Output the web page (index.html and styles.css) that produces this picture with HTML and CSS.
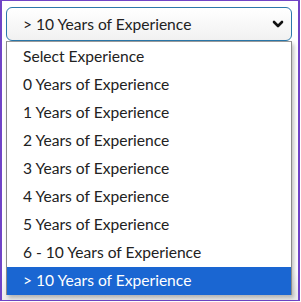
FILE: index.html
```html
<html>
<head>
<title>Experience</title>
<link rel="stylesheet" href="styles.css">
</head>
<body>
<div class="frame">
  <div class="field">
    <div class="selectBox">
      <span class="current">&gt; 10 Years of Experience</span>
      <svg class="chevron" width="12" height="8" viewBox="0 0 12 8"><polyline points="2,2 6,6 10,2" fill="none" stroke="#111" stroke-width="2.6" stroke-linecap="round" stroke-linejoin="round"/></svg>
    </div>
    <ul class="options">
      <li>Select Experience</li>
      <li>0 Years of Experience</li>
      <li>1 Years of Experience</li>
      <li>2 Years of Experience</li>
      <li>3 Years of Experience</li>
      <li>4 Years of Experience</li>
      <li>5 Years of Experience</li>
      <li>6 - 10 Years of Experience</li>
      <li class="selected">&gt; 10 Years of Experience</li>
    </ul>
  </div>
</div>
</body>
</html>
```
FILE: styles.css
```css
body{
    margin: 0;
    font-family: Lato, "Open Sans", sans-serif;
    font-size: 15.6px;
    color: #222;
}
.frame{
    width: 300px;
    height: 301px;
    border: 1px solid #7044c6;
    border-left-width: 2px;
    border-right-width: 2px;
    padding: 6px 0 0 4px;
    box-sizing: border-box;
    background: linear-gradient(#fff 90%, #ececec);
}
.field{
    position: relative;
    width: 286px;
}
.selectBox{
    height: 34px;
    box-sizing: border-box;
    border: 1px solid #2a78ab;
    border-radius: 6px;
    background: linear-gradient(#fff, #f1f1f1);
    display: flex;
    align-items: center;
    justify-content: space-between;
    padding: 0 7px 0 16px;
}
.current{
    padding-bottom: 1px;
}
.options{
    position: absolute;
    left: 0;
    top: 34px;
    width: 286px;
    margin: 0;
    padding: 1px 0 0 0;
    list-style: none;
    background: #fff;
    border-left: 1px solid #8a8a8a;
    border-right: 1px solid #8a8a8a;
    border-top: 1px solid #9a9a9a;
    box-sizing: border-box;
    box-shadow: 2px 3px 4px rgba(0,0,0,0.25);
}
.options li{
    height: 28px;
    line-height: 27px;
    padding-left: 16px;
}
.options li.selected{
    background: #1a66d2;
    color: #fff;
}
```
